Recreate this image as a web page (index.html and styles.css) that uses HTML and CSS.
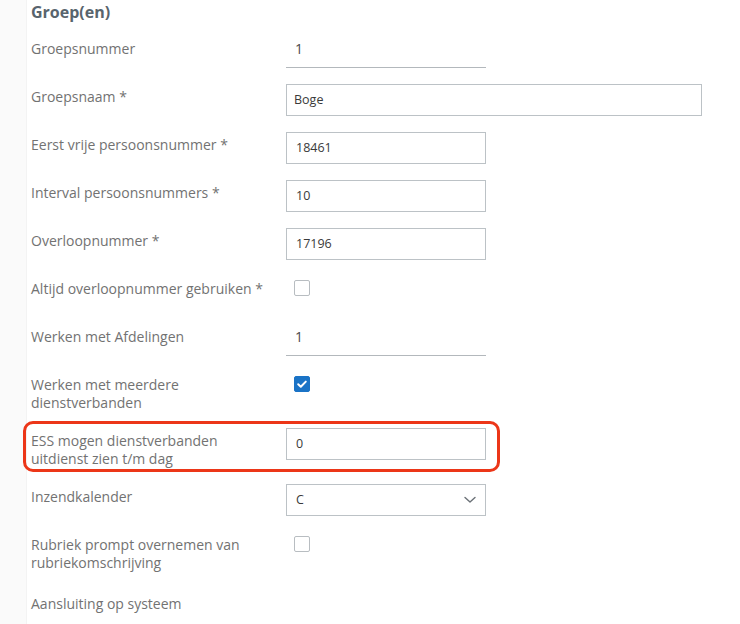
FILE: index.html
```html
<!DOCTYPE html>
<html lang="nl">
<head>
<meta charset="utf-8">
<title>Groep(en)</title>
<link rel="stylesheet" href="styles.css">
</head>
<body>
<div class="page">
  <div class="rail"></div>
  <main class="content">
    <h2 class="title">Groep(en)</h2>
    <div class="form">
      <div class="row">
        <div class="label">Groepsnummer</div>
        <div class="field"><div class="line-input">1</div></div>
      </div>
      <div class="row">
        <div class="label">Groepsnaam *</div>
        <div class="field"><div class="box-input wide">Boge</div></div>
      </div>
      <div class="row">
        <div class="label">Eerst vrije persoonsnummer *</div>
        <div class="field"><div class="box-input">18461</div></div>
      </div>
      <div class="row">
        <div class="label">Interval persoonsnummers *</div>
        <div class="field"><div class="box-input">10</div></div>
      </div>
      <div class="row">
        <div class="label">Overloopnummer *</div>
        <div class="field"><div class="box-input">17196</div></div>
      </div>
      <div class="row">
        <div class="label">Altijd overloopnummer gebruiken *</div>
        <div class="field"><span class="checkbox"></span></div>
      </div>
      <div class="row">
        <div class="label">Werken met Afdelingen</div>
        <div class="field"><div class="line-input">1</div></div>
      </div>
      <div class="row">
        <div class="label">Werken met meerdere<br>dienstverbanden</div>
        <div class="field"><span class="checkbox checked"><svg viewBox="0 0 16 16" width="16" height="16"><polyline points="4.2,8.3 6.8,10.8 11.8,5.6" fill="none" stroke="#fff" stroke-width="2" stroke-linecap="round" stroke-linejoin="round"/></svg></span></div>
      </div>
      <div class="row highlighted">
        <div class="label">ESS mogen dienstverbanden<br>uitdienst zien t/m dag</div>
        <div class="field"><div class="box-input">0</div></div>
        <span class="highlight"></span>
      </div>
      <div class="row">
        <div class="label">Inzendkalender</div>
        <div class="field"><div class="box-input select">C<svg class="chevron" viewBox="0 0 14 8" width="14" height="8"><polyline points="2,1.5 7,6 12,1.5" fill="none" stroke="#6b7177" stroke-width="1.4" stroke-linecap="round" stroke-linejoin="round"/></svg></div></div>
      </div>
      <div class="row">
        <div class="label">Rubriek prompt overnemen van<br>rubriekomschrijving</div>
        <div class="field"><span class="checkbox"></span></div>
      </div>
      <div class="row last">
        <div class="label">Aansluiting op systeem</div>
        <div class="field"></div>
      </div>
    </div>
  </main>
</div>
</body>
</html>
```
FILE: styles.css
```css
* { box-sizing: border-box; }
html, body { margin: 0; padding: 0; background: #fff; }
body {
  font-family: "Open Sans", "Liberation Sans", sans-serif;
  color: #727272;
  width: 740px;
  height: 624px;
  overflow: hidden;
}
.page { display: flex; min-height: 624px; }
.rail {
  width: 27px;
  flex: none;
  background: #fafafa;
  border-right: 1px solid #f3f3f3;
}
.content { flex: 1; padding-left: 4px; }
.title {
  margin: 0;
  font-size: 16px;
  line-height: 24px;
  font-weight: 700;
  color: #58646d;
  height: 36px;
}
.form { display: flex; flex-direction: column; }
.row {
  display: flex;
  align-items: flex-start;
  margin-bottom: 16px;
  position: relative;
}
.label {
  width: 255px;
  flex: none;
  font-size: 14px;
  line-height: 18px;
  padding-top: 4px;
  min-height: 32px;
}
.field { flex: 1; min-height: 32px; }
.line-input {
  width: 200px;
  height: 32px;
  border-bottom: 1px solid #b3b8bc;
  padding-left: 9px;
  font-size: 14px;
  line-height: 26px;
  color: #4a4a4a;
}
.box-input {
  width: 200px;
  height: 32px;
  border: 1px solid #bcc2c6;
  padding-left: 9px;
  font-size: 12.5px;
  line-height: 30px;
  color: #3a3a3a;
  background: #fff;
}
.box-input.wide { width: 416px; padding-left: 7px; }
.select {
  display: flex;
  align-items: center;
  justify-content: space-between;
  padding-right: 8px;
}
.chevron { display: block; }
.checkbox {
  display: block;
  width: 16px;
  height: 16px;
  margin: 4px 0 0 8px;
  border: 1px solid #b8bdc1;
  border-radius: 2px;
  background: #fff;
}
.checkbox.checked {
  background: #1a73c6;
  border-color: #1a73c6;
  position: relative;
}
.checkbox.checked svg {
  position: absolute;
  left: -1px;
  top: -1px;
}
.highlight {
  position: absolute;
  left: -8px;
  top: -7px;
  width: 477px;
  height: 51px;
  border: 3px solid #ec3618;
  border-radius: 10px;
  pointer-events: none;
}
.row.last { margin-top: 3px; }
```
